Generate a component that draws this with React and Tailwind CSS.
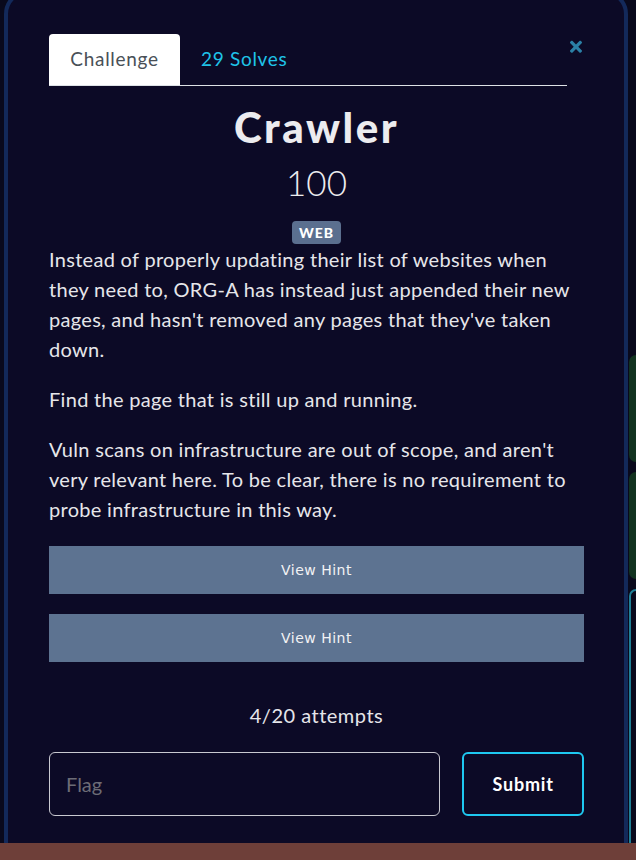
import React from "react";

function CloseIcon() {
  return (
    <svg width="12" height="17.5" viewBox="0 0 352 512" fill="#2b80a6" aria-hidden="true">
      <path d="M242.72 256l100.07-100.07c12.28-12.28 12.28-32.19 0-44.48l-22.240-22.24c-12.28-12.28-32.19-12.28-44.48 0L176 189.28 75.93 89.21c-12.28-12.28-32.19-12.28-44.48 0L9.21 111.45c-12.28 12.28-12.28 32.19 0 44.48L109.28 256 9.21 356.07c-12.28 12.28-12.28 32.19 0 44.48l22.24 22.24c12.28 12.28 32.2 12.28 44.48 0L176 322.72l100.07 100.07c12.28 12.28 32.2 12.28 44.48 0l22.24-22.24c12.28-12.28 12.28-32.19 0-44.48L242.72 256z" />
    </svg>
  );
}

export default function App() {
  return (
    <div className="w-[636px] h-[860px] overflow-hidden flex flex-col bg-[#09091c] font-['Lato',sans-serif]">
      <div className="h-[843px] flex overflow-hidden">
        {/* spacer left */}
        <div className="w-[4px] shrink-0" />
        {/* modal */}
        <div className="w-[624px] shrink-0 -mt-[10px] h-[900px] rounded-[24px] border-4 border-[#13295a] bg-[#0c0a26] pt-[40px] pl-[41px] pr-[40px]">
          {/* header */}
          <div className="flex items-start justify-between">
            <div className="w-[518px] flex items-end border-b border-[#dee2e6]">
              <div className="h-[51px] w-[131px] bg-white rounded-t-[4px] flex items-center justify-center text-[19px] tracking-[0.7px] text-[#495057]">
                Challenge
              </div>
              <div className="h-[51px] flex items-center pl-[21px] text-[19px] tracking-[0.7px] text-[#1fc3e8]">
                29 Solves
              </div>
            </div>
            <div className="mt-[4px] mr-[2px]">
              <CloseIcon />
            </div>
          </div>

          {/* title */}
          <div className="mt-[17px] h-[48px] leading-[48px] text-center text-[42px] font-black text-[#ececef] tracking-[2.5px]">
            Crawler
          </div>
          <div className="mt-[10px] h-[42px] leading-[42px] text-center text-[35px] font-light text-[#ececef]">
            100
          </div>
          <div className="mt-[18px] flex justify-center">
            <span className="h-[23px] w-[49px] rounded-[4px] bg-[#5b6f8f] text-white text-[14px] font-black tracking-[1px] flex items-center justify-center">
              WEB
            </span>
          </div>

          {/* description */}
          <div className="flex flex-col gap-[20px] text-[20px] leading-[30px] text-[#e6e6ea] tracking-[0.3px]">
            <p>
              Instead of properly updating their list of websites when they need to, ORG-A has instead just appended their new pages, and hasn't removed any pages that they've taken down.
            </p>
            <p>Find the page that is still up and running.</p>
            <p>
              Vuln scans on infrastructure are out of scope, and aren't very relevant here. To be clear, there is no requirement to probe infrastructure in this way.
            </p>
          </div>

          {/* hints */}
          <div className="mt-[22px] flex flex-col gap-[20px]">
            <button className="h-[48px] w-full bg-[#5d7391] text-[#f2f2f4] text-[14px] tracking-[0.5px] font-['DejaVu_Sans',sans-serif]">
              View Hint
            </button>
            <button className="h-[48px] w-full bg-[#5d7391] text-[#f2f2f4] text-[14px] tracking-[0.5px] font-['DejaVu_Sans',sans-serif]">
              View Hint
            </button>
          </div>

          {/* attempts */}
          <div className="mt-[38px] h-[30px] leading-[30px] text-center text-[20px] tracking-[0.5px] text-[#e6e6ea]">
            4/20 attempts
          </div>

          {/* flag form */}
          <div className="mt-[22px] flex items-start gap-[22px]">
            <div className="h-[64px] w-[392px] rounded-[6px] border border-[#c9c9d1] flex items-center pl-[16px] text-[20px] text-[#6c6c76]">
              Flag
            </div>
            <button className="h-[64px] w-[122px] rounded-[6px] border-2 border-[#1ec8f0] text-white text-[18px] font-bold tracking-[0.8px]">
              Submit
            </button>
          </div>
        </div>
        {/* right background strip */}
        <div className="flex-1 pl-[1px] pt-[355px] flex flex-col gap-[10px]">
          <div className="h-[110px] rounded-l-[8px] bg-[#123320]" />
          <div className="h-[110px] rounded-l-[8px] bg-[#123320]" />
          <div className="h-[260px] rounded-tl-[8px] border-l-2 border-t-2 border-[#1f7f95]" />
        </div>
      </div>
      <div className="h-[17px] bg-[#6e3f39]" />
    </div>
  );
}
